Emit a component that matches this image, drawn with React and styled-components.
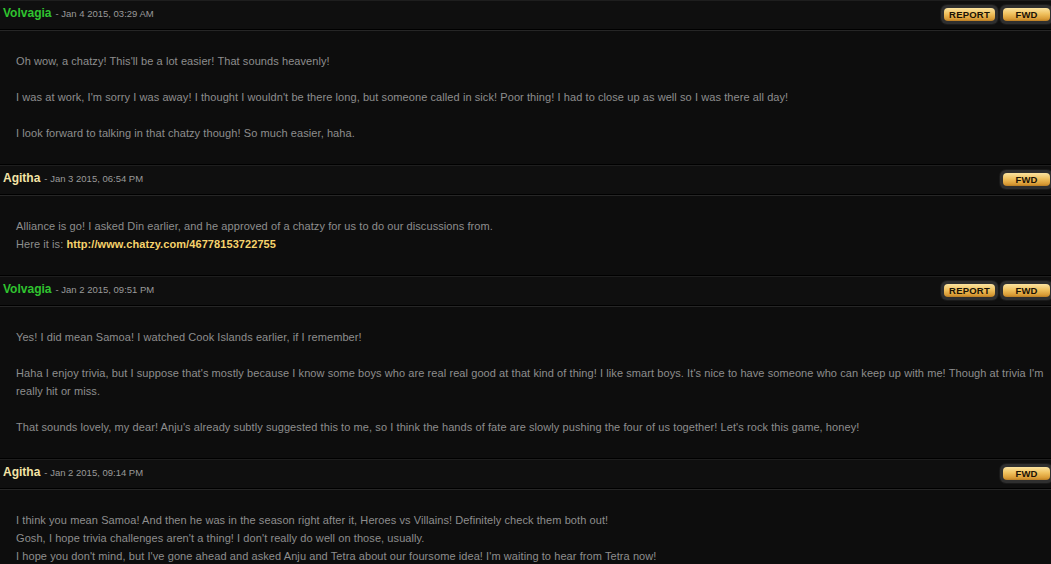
import React from "react";
import styled, { createGlobalStyle } from "styled-components";

const GlobalStyle = createGlobalStyle`
  html, body {
    margin: 0;
    padding: 0;
    background: #0d0d0d;
  }
  body {
    font-family: "Liberation Sans", Arial, sans-serif;
    overflow: hidden;
  }
`;

const Page = styled.div`
  width: 1051px;
  background: #0d0d0d;
`;

const Post = styled.div`
  display: flex;
  flex-direction: column;
`;

const Header = styled.div`
  height: 28px;
  display: flex;
  align-items: center;
  justify-content: space-between;
  padding-left: 3px;
  background: #0f0f0f;
  border-top: 1px solid #1e1e1e;
  border-bottom: 1px solid #000;
`;

const Meta = styled.div`
  display: flex;
  align-items: baseline;
  gap: 4px;
  margin-top: -4px;
`;

const Name = styled.span`
  font-size: 12px;
  font-weight: bold;
  color: ${(p) => p.$color};
`;

const Stamp = styled.span`
  font-size: 9.5px;
  color: #9a9a9a;
`;

const Actions = styled.div`
  display: flex;
  gap: 2px;
  margin-right: -2px;
  margin-top: -2px;
`;

const ButtonFrame = styled.div`
  background: #2f2f2f;
  border-radius: 6px;
  padding: 3px;
  box-shadow: 0 0 0 1px #1a1a1a;
`;

const Button = styled.div`
  width: ${(p) => p.$w}px;
  height: 13px;
  border-radius: 4px;
  background: linear-gradient(180deg, #fbe3a0 0%, #f0c15e 45%, #d89a34 85%, #b87c24 100%);
  color: #1a1205;
  font-family: "Liberation Sans", Arial, sans-serif;
  font-size: 9.5px;
  font-weight: bold;
  display: flex;
  align-items: center;
  justify-content: center;
  letter-spacing: 0.2px;
`;

const Body = styled.div`
  padding: 21px 0 22px 16px;
  border-top: 1px solid #262626;
  border-bottom: 1px solid #000;
  background: #0d0d0d;
  color: #8e8e8e;
  font-size: 11px;
  line-height: 18px;
  letter-spacing: 0.08px;
`;

const Para = styled.p`
  margin: 0;
  & + & {
    margin-top: 18px;
  }
`;

const Link = styled.a`
  color: #f6d36c;
  font-weight: bold;
  text-decoration: none;
`;

const VOLV = "#2fc42f";
const AGI = "#f4e4a6";

const posts = [
  {
    name: "Volvagia",
    color: VOLV,
    date: "Jan 4 2015, 03:29 AM",
    report: true,
    paras: [
      ["Oh wow, a chatzy! This'll be a lot easier! That sounds heavenly!"],
      ["I was at work, I'm sorry I was away! I thought I wouldn't be there long, but someone called in sick! Poor thing! I had to close up as well so I was there all day!"],
      ["I look forward to talking in that chatzy though! So much easier, haha."],
    ],
  },
  {
    name: "Agitha",
    color: AGI,
    date: "Jan 3 2015, 06:54 PM",
    report: false,
    paras: [
      [
        "Alliance is go! I asked Din earlier, and he approved of a chatzy for us to do our discussions from.",
        <>
          Here it is: <Link href="#">http://www.chatzy.com/46778153722755</Link>
        </>,
      ],
    ],
  },
  {
    name: "Volvagia",
    color: VOLV,
    date: "Jan 2 2015, 09:51 PM",
    report: true,
    paras: [
      ["Yes! I did mean Samoa! I watched Cook Islands earlier, if I remember!"],
      ["Haha I enjoy trivia, but I suppose that's mostly because I know some boys who are real real good at that kind of thing! I like smart boys. It's nice to have someone who can keep up with me! Though at trivia I'm really hit or miss."],
      ["That sounds lovely, my dear! Anju's already subtly suggested this to me, so I think the hands of fate are slowly pushing the four of us together! Let's rock this game, honey!"],
    ],
  },
  {
    name: "Agitha",
    color: AGI,
    date: "Jan 2 2015, 09:14 PM",
    report: false,
    paras: [
      [
        "I think you mean Samoa! And then he was in the season right after it, Heroes vs Villains! Definitely check them both out!",
        "Gosh, I hope trivia challenges aren't a thing! I don't really do well on those, usually.",
        "I hope you don't mind, but I've gone ahead and asked Anju and Tetra about our foursome idea! I'm waiting to hear from Tetra now!",
      ],
    ],
  },
];

export default function App() {
  return (
    <Page>
      <GlobalStyle />
      {posts.map((p, i) => (
        <Post key={i}>
          <Header>
            <Meta>
              <Name $color={p.color}>{p.name}</Name>
              <Stamp>- {p.date}</Stamp>
            </Meta>
            <Actions>
              {p.report && (
                <ButtonFrame>
                  <Button $w={51}>REPORT</Button>
                </ButtonFrame>
              )}
              <ButtonFrame>
                <Button $w={47}>FWD</Button>
              </ButtonFrame>
            </Actions>
          </Header>
          <Body>
            {p.paras.map((lines, j) => (
              <Para key={j}>
                {lines.map((l, k) => (
                  <React.Fragment key={k}>
                    {k > 0 && <br />}
                    {l}
                  </React.Fragment>
                ))}
              </Para>
            ))}
          </Body>
        </Post>
      ))}
    </Page>
  );
}
